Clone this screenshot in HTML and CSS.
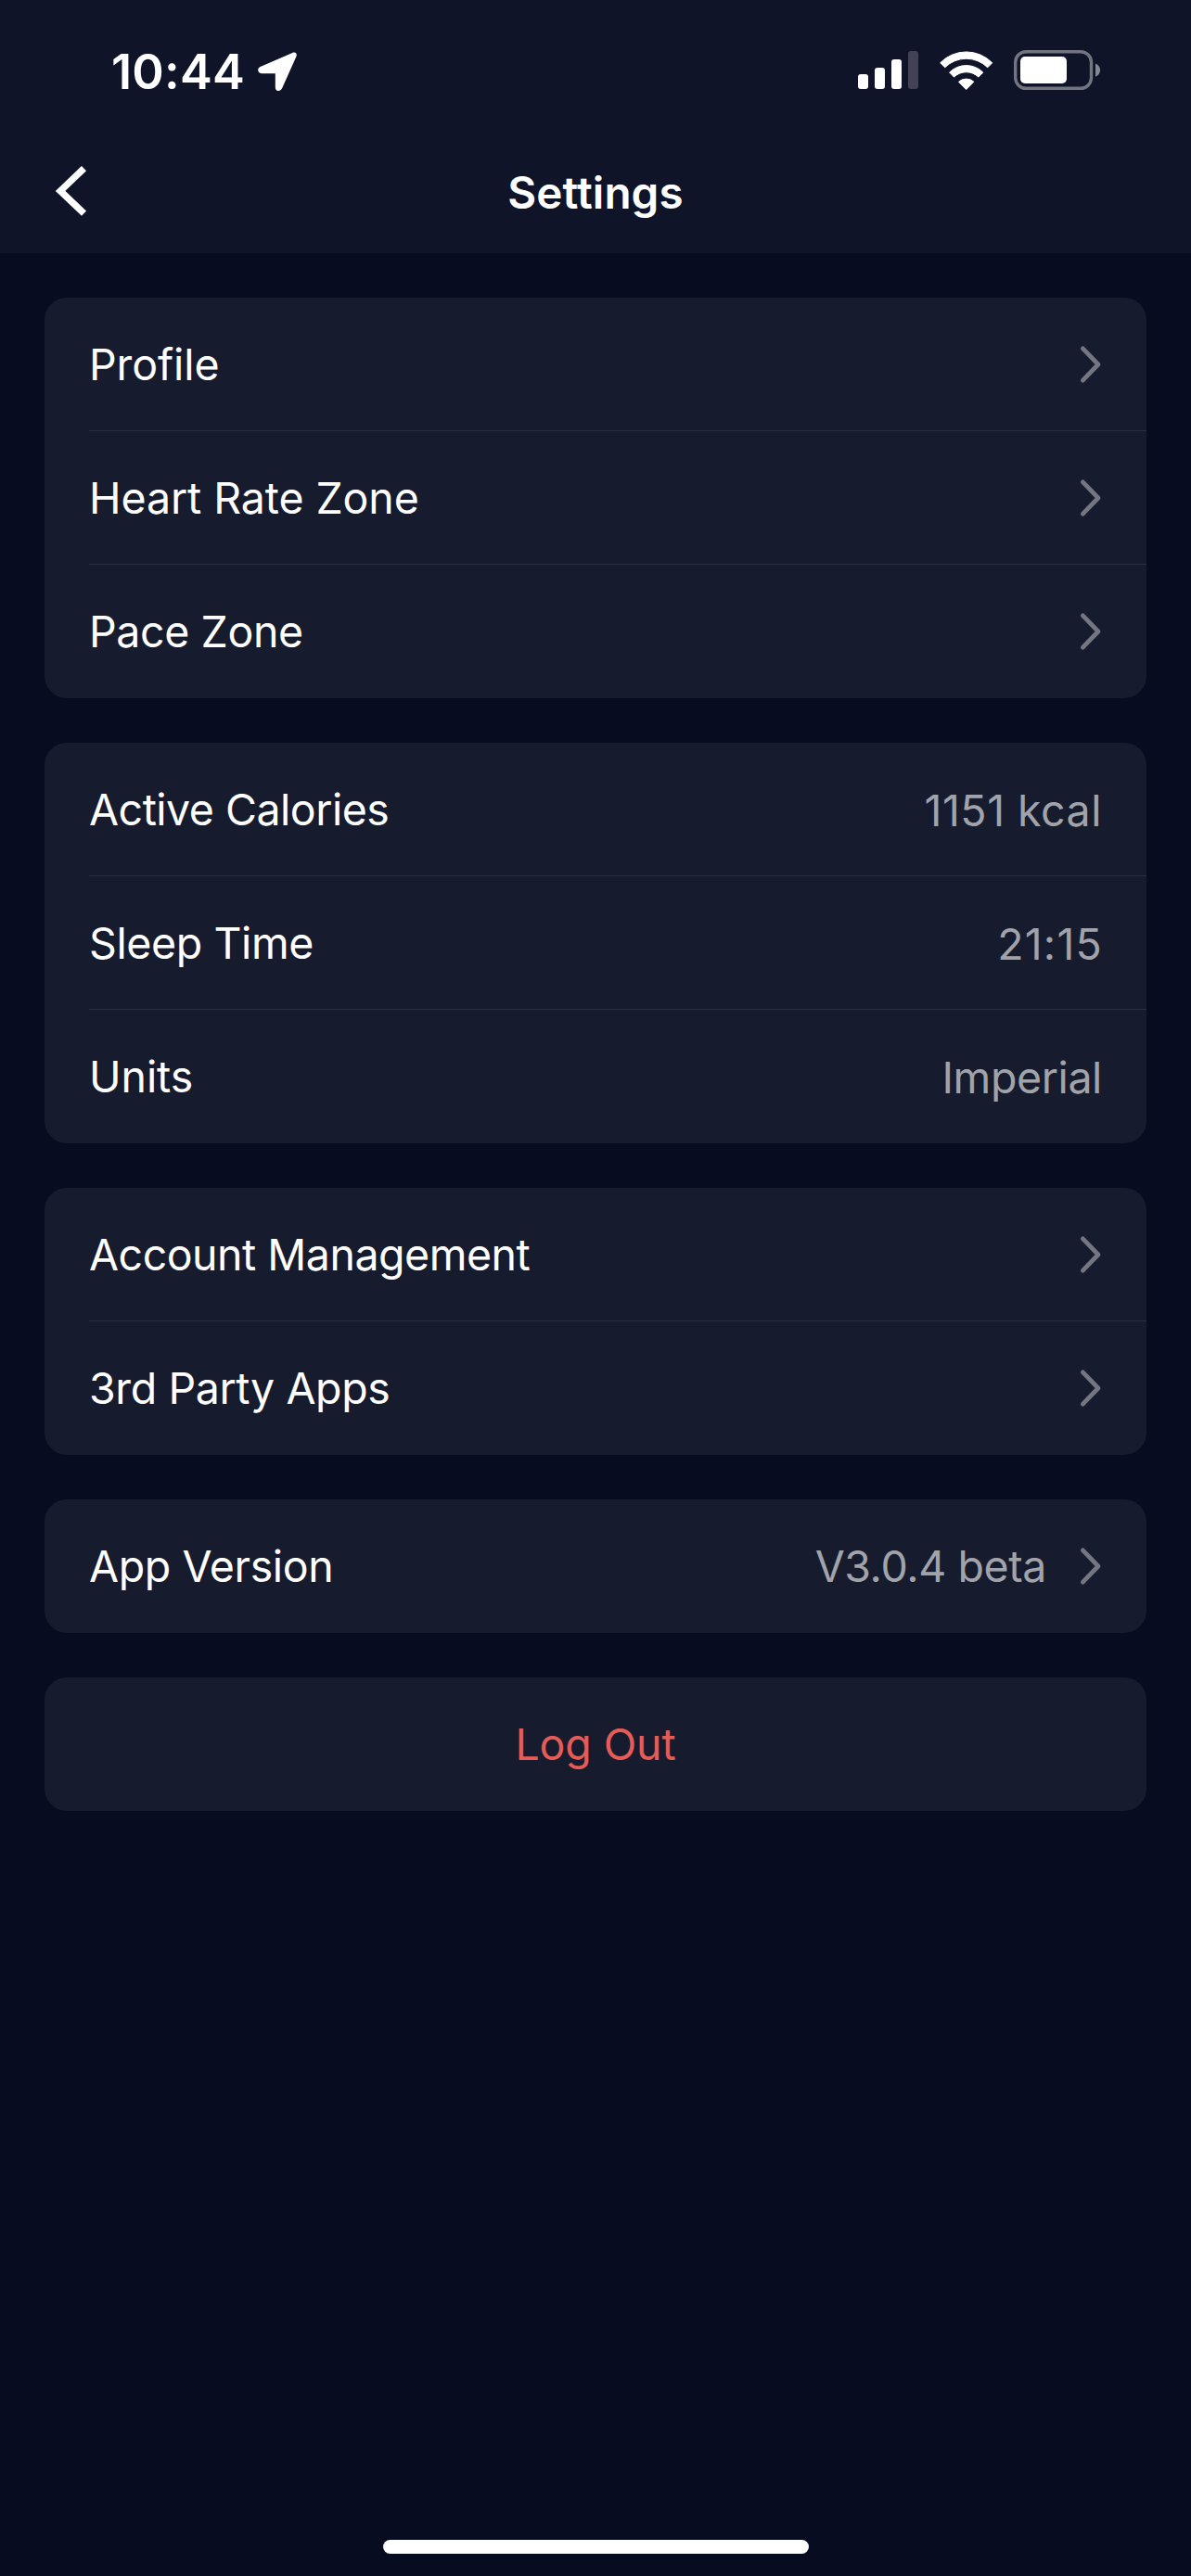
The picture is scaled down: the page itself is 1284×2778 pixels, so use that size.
FILE: index.html
```html
<!DOCTYPE html>
<html lang="en">
<head>
    <meta charset="UTF-8">
    <meta name="viewport" content="width=device-width, initial-scale=1.0">
    <title>Settings</title>
    <link rel="stylesheet" href="styles.css">
</head>
<body>
    <svg class="defs" width="0" height="0">
        <symbol id="chevron" viewBox="0 0 24 42">
            <path d="M3.4 3.8 L20 21 L3.4 38.2" fill="none" stroke="currentColor" stroke-width="4.8" stroke-linecap="round" stroke-linejoin="round"/>
        </symbol>
    </svg>

    <header class="header">
        <div class="status-bar">
            <div class="status-left">
                <span class="time">10:44</span>
                <svg class="location" width="42" height="42" viewBox="0 0 42 42">
                    <path d="M37.3 .9 C40.5 -.4 42.7 1.8 41.4 4.9 L26.2 39 C25.3 41 23.8 42 22 42 C19.9 41.8 18.8 40.3 18.8 38.2 V23.2 H4 C-.4 23.2 -1.2 17.7 2.6 16 Z" fill="#fff"/>
                </svg>
            </div>
            <div class="status-right">
                <svg class="signal" width="65" height="41" viewBox="0 0 65 41">
                    <rect x="0" y="25" width="11" height="16" rx="3" fill="#fff"/>
                    <rect x="18" y="18" width="11" height="23" rx="3" fill="#fff"/>
                    <rect x="36" y="9" width="11" height="32" rx="3" fill="#fff"/>
                    <rect x="54" y="0" width="11" height="41" rx="3" fill="#414354"/>
                </svg>
                <svg class="wifi" width="58" height="42" viewBox="0 0 58 42">
                    <g fill="#fff" stroke="#fff" stroke-width="1" stroke-linejoin="round">
                        <path d="M.7 12.8 A39 39 0 0 1 56.7 12.8 L51.7 17.8 A32.5 32.5 0 0 0 5.7 17.8 Z"/>
                        <path d="M10.6 23.1 A25.5 25.5 0 0 1 46.8 23.1 L41.9 28.1 A19 19 0 0 0 15.5 28.1 Z"/>
                        <path d="M20.5 33.3 A12 12 0 0 1 36.9 33.3 L28.7 41.5 Z"/>
                    </g>
                </svg>
                <svg class="battery" width="94" height="43" viewBox="0 0 94 43">
                    <rect x="1.7" y="1.7" width="81.8" height="39.6" rx="11.5" fill="none" stroke="#727480" stroke-width="3.4"/>
                    <rect x="7" y="7" width="50" height="29" rx="5" fill="#fff"/>
                    <path d="M88 14.5 C94.8 17 94.8 26 88 28.7 Z" fill="#858791"/>
                </svg>
            </div>
        </div>
        <nav class="nav-bar">
            <svg class="back" width="40" height="56" viewBox="0 0 40 56">
                <path d="M34.5 3.7 L9.1 27.9 L34.5 52.1" fill="none" stroke="#fff" stroke-width="7.3"/>
            </svg>
            <h1 class="title">Settings</h1>
        </nav>
    </header>

    <main class="content">
        <section class="card">
            <div class="row">
                <span class="label normal">Profile</span>
                <svg class="chevron"><use href="#chevron"/></svg>
            </div>
            <div class="row">
                <span class="label normal">Heart Rate Zone</span>
                <svg class="chevron"><use href="#chevron"/></svg>
            </div>
            <div class="row">
                <span class="label">Pace Zone</span>
                <svg class="chevron"><use href="#chevron"/></svg>
            </div>
        </section>

        <section class="card">
            <div class="row">
                <span class="label tight">Active Calories</span>
                <span class="value end digits">1151 kcal</span>
            </div>
            <div class="row">
                <span class="label">Sleep Time</span>
                <span class="value end clock">21:15</span>
            </div>
            <div class="row">
                <span class="label normal">Units</span>
                <span class="value end">Imperial</span>
            </div>
        </section>

        <section class="card">
            <div class="row">
                <span class="label tight">Account Management</span>
                <svg class="chevron"><use href="#chevron"/></svg>
            </div>
            <div class="row">
                <span class="label">3rd Party Apps</span>
                <svg class="chevron"><use href="#chevron"/></svg>
            </div>
        </section>

        <section class="card">
            <div class="row">
                <span class="label">App Version</span>
                <span class="value">V3.0.4 beta</span>
                <svg class="chevron"><use href="#chevron"/></svg>
            </div>
        </section>

        <section class="card">
            <div class="row logout">Log Out</div>
        </section>
    </main>

    <div class="home-indicator"></div>
</body>
</html>
```
FILE: styles.css
```css
* {
    box-sizing: border-box;
}
body {
    display: flex;
    flex-direction: column;
    margin: 0;
    height: 2778px;
    background: #070c21;
    color: #fff;
    font-family: Inter, "Liberation Sans", sans-serif;
    font-size: 46.5px;
    letter-spacing: -0.4px;
}
svg {
    display: block;
    flex: none;
}
.defs {
    position: absolute;
}

/* Header */
.header {
    height: 273px;
    background: #0f1429;
}
.status-bar {
    display: flex;
    justify-content: space-between;
    align-items: center;
    height: 141px;
    padding: 13px 96px 0 120px;
}
.status-left,
.status-right {
    display: flex;
    align-items: center;
}
.status-left {
    gap: 14px;
}
.time {
    font-size: 52.3px;
    font-weight: 600;
    letter-spacing: 0.2px;
}
.signal {
    margin-right: 23px;
}
.wifi {
    margin-right: 22px;
}
.battery {
    margin-right: 1px;
}
.status-right {
    padding-bottom: 3px;
}
.nav-bar {
    display: grid;
    grid-template-columns: 1fr auto 1fr;
    align-items: center;
    height: 132px;
    padding: 0 56px;
}
.back {
    margin-bottom: 2px;
}
.title {
    margin: 0;
    padding-top: 1px;
    font-size: 47.6px;
    font-weight: 580;
    letter-spacing: 0.1px;
}

/* Setting groups */
.content {
    display: flex;
    flex: 1;
    flex-direction: column;
    gap: 48px;
    padding: 48px;
}
.card {
    padding-left: 48px;
    border-radius: 24px;
    background: #171b2e;
}
.row {
    display: flex;
    align-items: center;
    height: 144px;
    padding: 1px 48px 0 0;
    border-bottom: 1px solid #2b2e40;
}
.row:last-child {
    padding-top: 0;
    border-bottom: none;
}
.label {
    flex: 1;
}
.normal {
    letter-spacing: -0.1px;
}
.tight {
    letter-spacing: -0.5px;
}
.value {
    color: #a1a3aa;
}
.end {
    padding-top: 2px;
}
.digits {
    letter-spacing: 0.5px;
}
.clock {
    margin-right: -1px;
    letter-spacing: 1.2px;
}
.chevron {
    width: 24px;
    height: 42px;
    color: #747682;
}
.value + .chevron {
    margin-left: 36px;
}
.logout {
    justify-content: center;
    padding-right: 48px;
    margin-left: -48px;
    padding-left: 48px;
    color: #e55b57;
    letter-spacing: -0.14px;
}

.home-indicator {
    width: 459px;
    height: 15px;
    margin: 0 auto 24px;
    border-radius: 8px;
    background: #fff;
}
```
